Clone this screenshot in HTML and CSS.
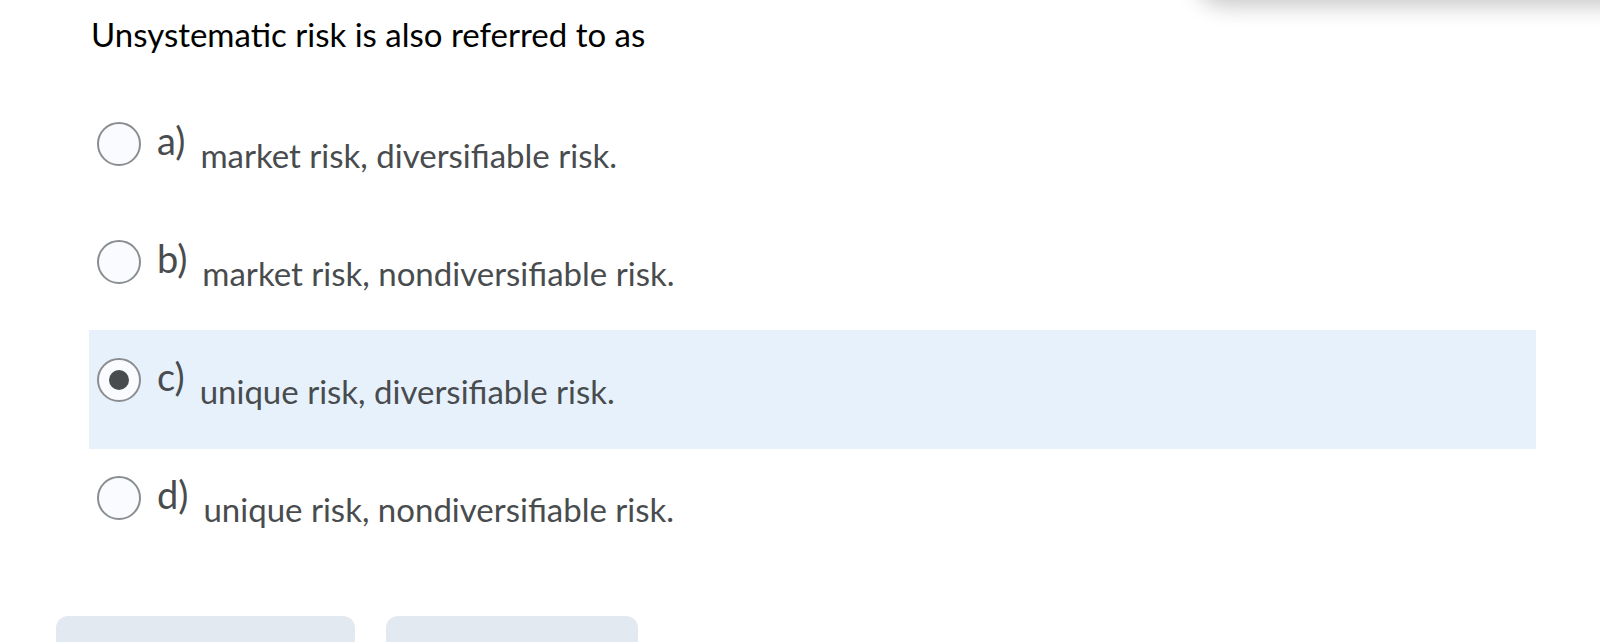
FILE: index.html
```html
<!DOCTYPE html>
<html>
<head>
<meta charset="utf-8">
<link rel="stylesheet" href="styles.css">
</head>
<body>
<div class="floating-bar"></div>
<main class="page">
  <h1 class="question">Unsystematic risk is also referred to as</h1>
  <div class="options">
    <label class="option">
      <span class="radio"></span>
      <span class="letter">a)</span>
      <span class="text">market risk, diversifiable risk.</span>
    </label>
    <label class="option">
      <span class="radio"></span>
      <span class="letter">b)</span>
      <span class="text">market risk, nondiversifiable risk.</span>
    </label>
    <label class="option selected">
      <span class="radio checked"></span>
      <span class="letter">c)</span>
      <span class="text">unique risk, diversifiable risk.</span>
    </label>
    <label class="option">
      <span class="radio"></span>
      <span class="letter">d)</span>
      <span class="text">unique risk, nondiversifiable risk.</span>
    </label>
  </div>
</main>
<div class="actions">
  <div class="btn btn-wide"></div>
  <div class="btn btn-narrow"></div>
</div>
</body>
</html>
```

FILE: styles.css
```css
html, body {
  margin: 0;
  padding: 0;
  background: #ffffff;
  height: 642px;
  overflow: hidden;
}

body {
  font-family: Lato, "Open Sans", sans-serif;
  position: relative;
}

.floating-bar {
  position: absolute;
  top: -60px;
  left: 1195px;
  width: 520px;
  height: 60px;
  background: #ffffff;
  border-radius: 30px;
  box-shadow: 0 6px 22px rgba(0, 0, 0, 0.22);
}

.page {
  padding: 0 64px 0 89px;
}

.question {
  margin: 0;
  padding: 14px 0 0 2px;
  font-size: 33px;
  font-weight: 400;
  line-height: 40px;
  color: #000000;
}

.options {
  margin-top: 40px;
  display: flex;
  flex-direction: column;
}

.option {
  display: flex;
  align-items: flex-start;
  height: 118px;
  box-sizing: border-box;
  padding-left: 8px;
}

.option.selected {
  height: 119px;
  margin-bottom: -1px;
  background: #e6f1fc;
}

.radio {
  flex: none;
  width: 44px;
  height: 44px;
  margin-top: 28px;
  box-sizing: border-box;
  border: 2px solid #8b8e90;
  border-radius: 50%;
  background: #f9fbff;
  display: flex;
  align-items: center;
  justify-content: center;
}

.radio.checked::after {
  content: "";
  width: 20px;
  height: 20px;
  border-radius: 50%;
  background: #494c4e;
}

.letter {
  margin-left: 16px;
  margin-top: 24px;
  font-size: 38px;
  line-height: 44px;
  color: #494c4e;
}

.text {
  margin-left: 15px;
  margin-top: 41px;
  font-size: 33px;
  line-height: 40px;
  color: #494c4e;
}

.actions {
  position: absolute;
  left: 0;
  right: 0;
  top: 616px;
  display: flex;
  gap: 31px;
  padding-left: 56px;
}

.btn {
  height: 60px;
  background: #e3e9f1;
  border-radius: 12px;
}

.btn-wide {
  width: 299px;
}

.btn-narrow {
  width: 252px;
}
```
